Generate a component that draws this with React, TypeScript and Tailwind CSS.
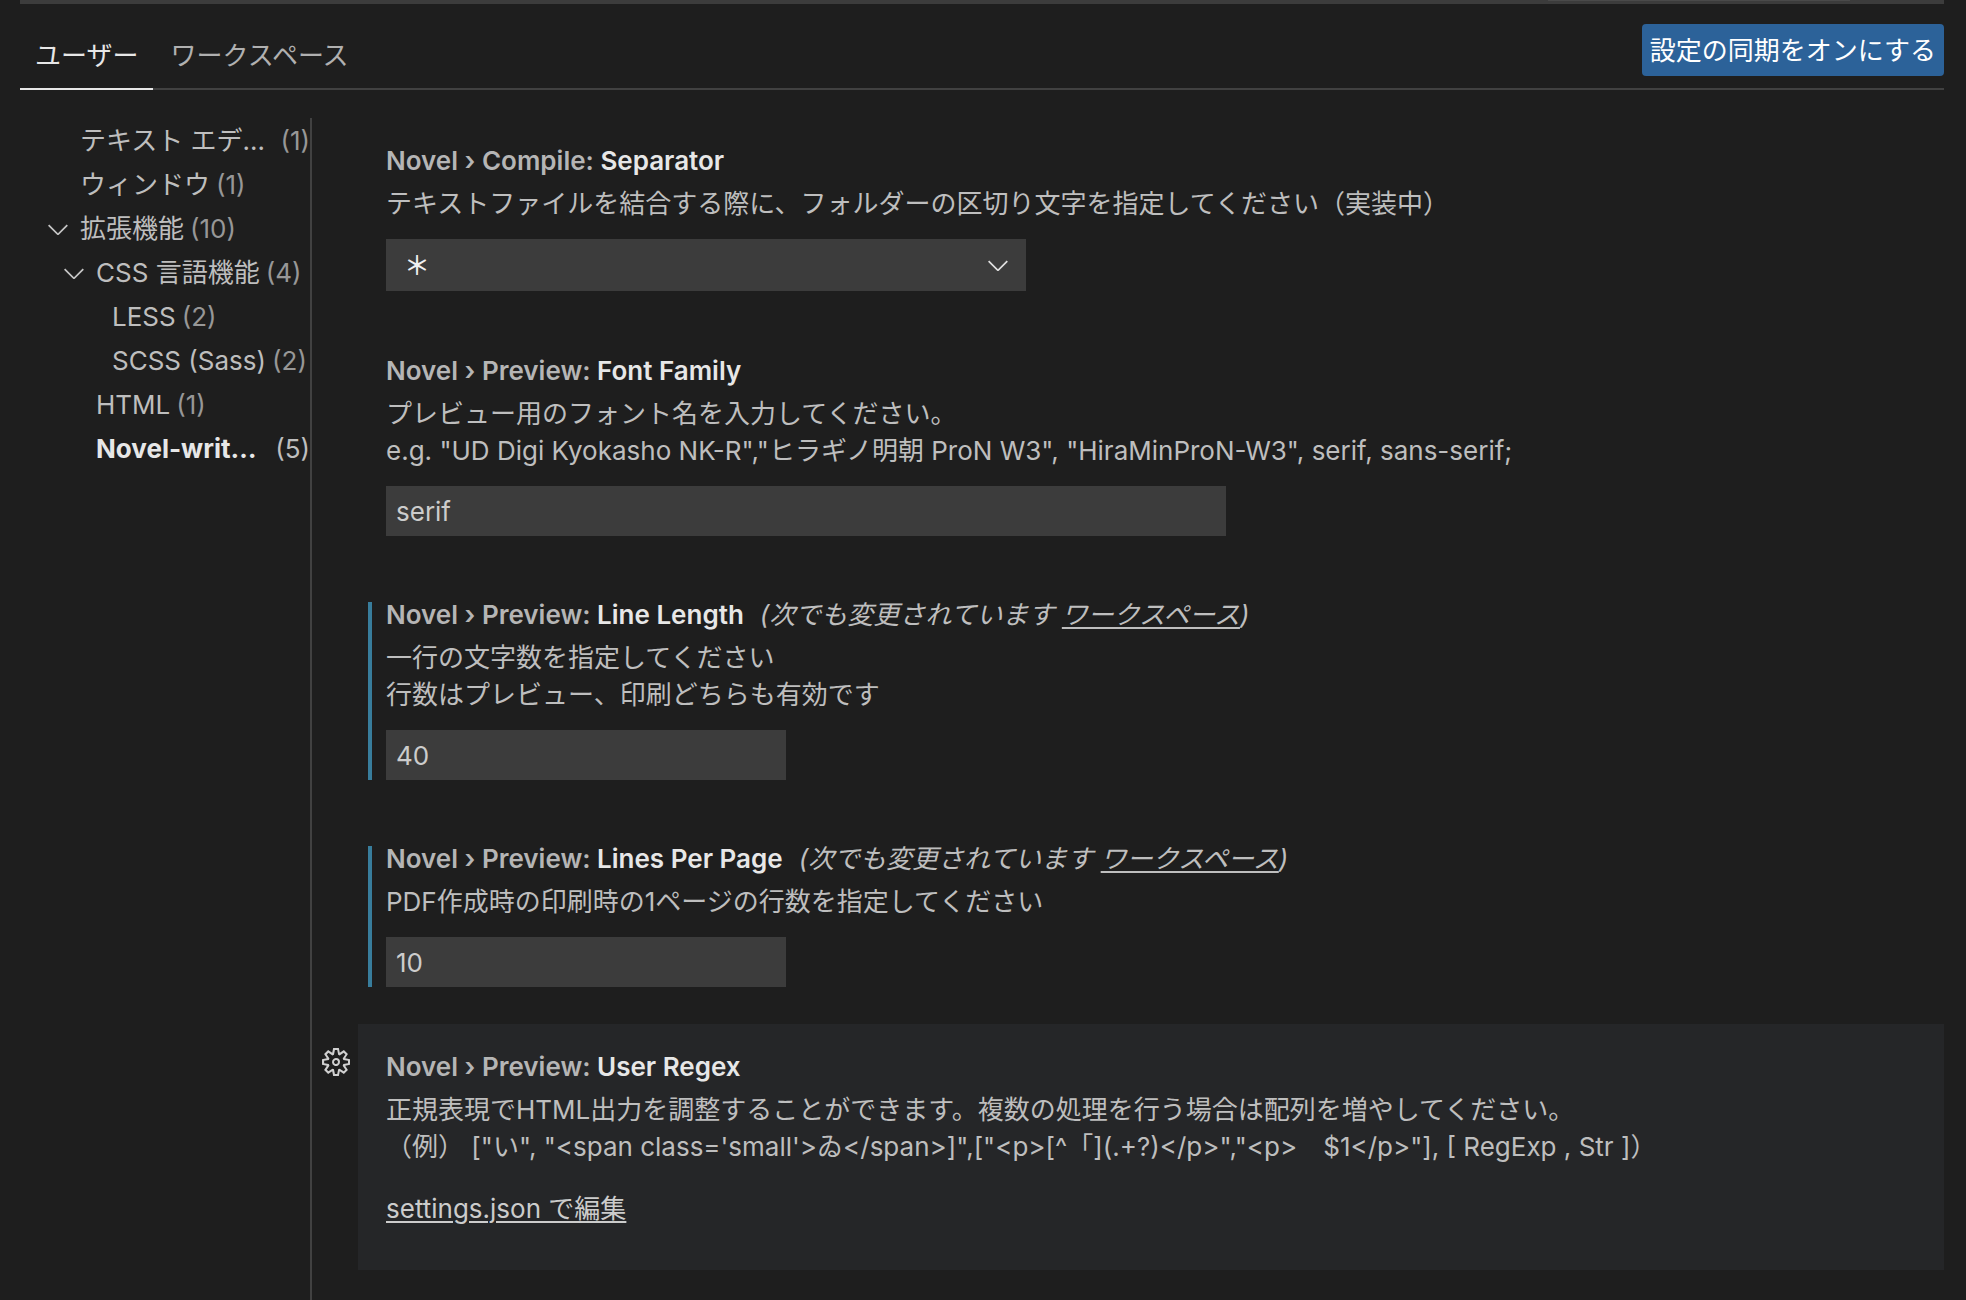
import React from "react";
import { VscChevronDown, VscSettingsGear } from "react-icons/vsc";

type TreeRow = {
  name: string;
  count: number;
  indent: string;
  open?: boolean;
  clipped?: boolean;
  selected?: boolean;
};

const tree: TreeRow[] = [
  { name: "テキスト エデ…", count: 1, indent: "pl-5", clipped: true },
  { name: "ウィンドウ", count: 1, indent: "pl-5" },
  { name: "拡張機能", count: 10, indent: "pl-5", open: true },
  { name: "CSS 言語機能", count: 4, indent: "pl-9", open: true },
  { name: "LESS", count: 2, indent: "pl-13" },
  { name: "SCSS (Sass)", count: 2, indent: "pl-13" },
  { name: "HTML", count: 1, indent: "pl-9" },
  { name: "Novel-writ…", count: 5, indent: "pl-9", clipped: true, selected: true },
];

function Tree() {
  return (
    <nav aria-label="設定の目次" className="w-[292px] shrink-0 border-r-2 border-[#414141]">
      <ul>
        {tree.map((row) => (
          <li key={row.name}>
            <button
              type="button"
              className={`flex h-11 w-full items-center pt-0.5 text-left whitespace-nowrap ${row.indent}`}
            >
              <span className="flex w-10 shrink-0 items-center pl-0.5">
                {row.open && <VscChevronDown className="size-8 text-[#c5c5c5]" />}
              </span>
              <span className={row.selected ? "font-bold text-[#e7e7e7]" : "text-[#bebebe]"}>{row.name}</span>
              <span
                className={`${row.clipped ? "ml-auto" : "ml-1.5"} ${row.selected ? "text-[#bebebe]" : "text-[#979797]"}`}
              >
                ({row.count})
              </span>
            </button>
          </li>
        ))}
      </ul>
    </nav>
  );
}

type SettingProps = {
  id?: string;
  category: string;
  name: string;
  lines: string[];
  modified?: boolean;
  children: React.ReactNode;
};

function Setting({ id, category, name, lines, modified, children }: SettingProps) {
  return (
    <section className={`ml-[46px] pt-[30px] pl-2.5 ${lines.length > 1 ? "pb-9" : "pb-[37px]"}`}>
      <div className={`border-l-4 pl-3.5 ${modified ? "border-[#387d9c]" : "border-transparent"}`}>
        <SettingTitle id={id} category={category} name={name} modified={modified} />
        <Description lines={lines} />
        <div className="mt-[17px] pr-5">{children}</div>
      </div>
    </section>
  );
}

function SettingTitle({ id, category, name, modified }: { id?: string; category: string; name: string; modified?: boolean }) {
  const label = (
    <>
      <span className="text-[#b5b5b5]">{category}: </span>
      <span className="text-[#e7e7e7]">{name}</span>
    </>
  );
  return (
    <div className="flex h-[26px] items-center whitespace-nowrap">
      {id ? (
        <label htmlFor={id} className="font-semibold">
          {label}
        </label>
      ) : (
        <h2 className="font-semibold">{label}</h2>
      )}
      {modified && (
        <span className="ml-4 text-[#bebebe] italic">
          (次でも変更されています{" "}
          <a href="#workspace" className="underline decoration-2 underline-offset-[3px]">
            ワークスペース
          </a>
          )
        </span>
      )}
    </div>
  );
}

function Description({ lines }: { lines: string[] }) {
  return (
    <div className="mt-[11px] text-[#bebebe]">
      {lines.map((line) => (
        <p key={line} className="leading-[37px] whitespace-pre-wrap">
          {line}
        </p>
      ))}
    </div>
  );
}

const inputClass = "block h-[50px] w-full bg-[#3c3c3c] px-2.5 text-[#cccccc] outline-none";

export default function App() {
  return (
    <div
      lang="ja"
      className="flex min-h-screen flex-col bg-[#1e1e1e] pr-[22px] pl-5 font-['Inter','Noto_Sans_CJK_JP',sans-serif] text-[26px] leading-9"
    >
      <div className="flex h-1 justify-end bg-[#3c3c3c] pr-[94px]">
        <div className="h-px w-[302px] bg-[#4a4a4a]" />
      </div>

      <header className="flex h-[86px] items-stretch justify-between border-b-2 border-[#414141]">
        <div role="tablist" className="-mb-0.5 flex gap-0.5">
          <button
            type="button"
            role="tab"
            aria-selected="true"
            className="border-b-2 border-[#e7e7e7] px-[15px] pt-5 text-[#e7e7e7]"
          >
            ユーザー
          </button>
          <button
            type="button"
            role="tab"
            aria-selected="false"
            className="border-b-2 border-transparent px-[15px] pt-5 text-[#b0b0b0]"
          >
            ワークスペース
          </button>
        </div>
        <button type="button" className="mt-5 h-[52px] rounded-sm bg-[#2c6299] px-2 pt-0.5 text-white">
          設定の同期をオンにする
        </button>
      </header>

      <div className="flex grow pt-7">
        <Tree />
        <main className="min-w-0 grow">
          <Setting
            id="separator"
            category="Novel › Compile"
            name="Separator"
            lines={["テキストファイルを結合する際に、フォルダーの区切り文字を指定してください（実装中）"]}
          >
            <div className="relative max-w-[640px]">
              <select
                id="separator"
                className="block h-[52px] w-full appearance-none bg-[#3c3c3c] pt-0.5 pl-[18px] font-medium text-[#f0f0f0] outline-none"
              >
                <option>＊</option>
              </select>
              <VscChevronDown className="pointer-events-none absolute top-2.5 right-3 size-8 text-[#e0e0e0]" />
            </div>
          </Setting>

          <Setting
            id="font-family"
            category="Novel › Preview"
            name="Font Family"
            lines={[
              "プレビュー用のフォント名を入力してください。",
              'e.g. "UD Digi Kyokasho NK-R","ヒラギノ明朝 ProN W3", "HiraMinProN-W3", serif, sans-serif;',
            ]}
          >
            <div className="max-w-[840px]">
              <input id="font-family" type="text" defaultValue="serif" className={inputClass} />
            </div>
          </Setting>

          <Setting
            id="line-length"
            category="Novel › Preview"
            name="Line Length"
            modified
            lines={["一行の文字数を指定してください", "行数はプレビュー、印刷どちらも有効です"]}
          >
            <div className="max-w-[400px]">
              <input id="line-length" type="text" defaultValue="40" className={inputClass} />
            </div>
          </Setting>

          <Setting
            id="lines-per-page"
            category="Novel › Preview"
            name="Lines Per Page"
            modified
            lines={["PDF作成時の印刷時の1ページの行数を指定してください"]}
          >
            <div className="max-w-[400px]">
              <input id="lines-per-page" type="text" defaultValue="10" className={inputClass} />
            </div>
          </Setting>

          <div className="flex items-start">
            <button type="button" aria-label="その他の操作" className="flex w-[46px] shrink-0 pt-6 pl-2.5">
              <VscSettingsGear className="size-7 text-[#d0d0d0]" />
            </button>
            <section className="min-w-0 grow bg-[#252628] pt-[30px] pb-[43px] pl-7">
              <SettingTitle category="Novel › Preview" name="User Regex" />
              <Description
                lines={[
                  "正規表現でHTML出力を調整することができます。複数の処理を行う場合は配列を増やしてください。",
                  "（例） [\"い\", \"<span class='small'>ゐ</span>]\",[\"<p>[^「](.+?)</p>\",\"<p>　$1</p>\"], [ RegExp , Str ]）",
                ]}
              />
              <p className="mt-[26px]">
                <a href="#settings-json" className="text-[#cccccc] underline decoration-2 underline-offset-[3px]">
                  settings.json で編集
                </a>
              </p>
            </section>
          </div>
        </main>
      </div>
    </div>
  );
}
